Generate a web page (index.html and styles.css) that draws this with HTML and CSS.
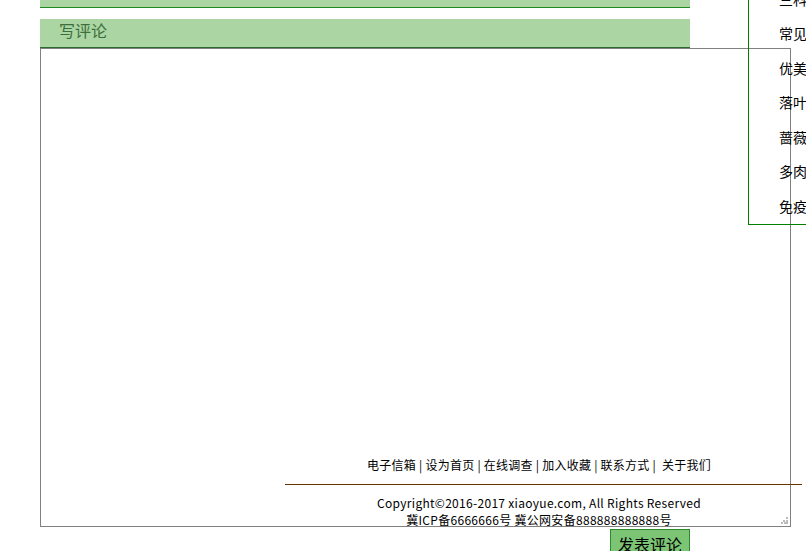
FILE: index.html
```html
<!DOCTYPE html>
<html lang="zh-CN">
<head>
<meta charset="utf-8">
<title>写评论</title>
<link rel="stylesheet" href="styles.css">
</head>
<body>
<div class="page">
  <div class="column">
    <div class="topbar"></div>
    <div class="comment-head">写评论</div>
    <div class="comment-stack">
      <textarea class="comment-box"></textarea>
      <span class="grip" aria-hidden="true"></span>
      <div class="footer">
        <div class="links">电子信箱 | 设为首页 | 在线调查 | 加入收藏 | 联系方式 |&nbsp; 关于我们</div>
        <div class="rule"></div>
        <div class="copy">Copyright©2016-2017 xiaoyue.com, All Rights Reserved</div>
        <div class="copy">冀ICP备6666666号 冀公网安备888888888888号</div>
      </div>
    </div>
    <div class="actions">
      <button class="submit" type="button">发表评论</button>
    </div>
  </div>
  <ul class="sidebar">
    <li>三科植物</li>
    <li>常见花卉</li>
    <li>优美盆栽</li>
    <li>落叶乔木</li>
    <li>蔷薇花开</li>
    <li>多肉植物</li>
    <li>免疫植物</li>
  </ul>
</div>
</body>
</html>
```

FILE: styles.css
```css
html, body {
  margin: 0;
  padding: 0;
  overflow: hidden;
  background: #ffffff;
}
body {
  font-family: "Noto Sans CJK SC", "Noto Sans", sans-serif;
  color: #000;
}
.page {
  position: relative;
  width: 806px;
  height: 551px;
  overflow: hidden;
}
.column {
  margin-left: 40px;
  width: 751px;
  display: flex;
  flex-direction: column;
}
.topbar {
  width: 650px;
  height: 7px;
  background: #acd5a4;
  border-bottom: 1px solid #1f8a1f;
}
.comment-head {
  margin-top: 11px;
  width: 631px;
  height: 28px;
  padding-left: 19px;
  background: #acd5a4;
  border-bottom: 1px solid #2e6b2e;
  color: #3b6f3b;
  font-size: 16px;
  line-height: 23px;
}
.comment-stack {
  display: grid;
  position: relative;
}
.comment-box {
  grid-area: 1 / 1;
  box-sizing: border-box;
  width: 751px;
  height: 479px;
  margin: 0;
  border: 1px solid #808080;
  background: transparent;
  resize: none;
  font-family: inherit;
}
.grip {
  position: absolute;
  right: 3px;
  bottom: 3px;
  width: 7px;
  height: 7px;
  background:
    linear-gradient(#bbb, #bbb) 5px 0 / 2px 2px no-repeat,
    linear-gradient(#bbb, #bbb) 2px 3px / 2px 2px no-repeat,
    linear-gradient(#bbb, #bbb) 5px 3px / 2px 2px no-repeat,
    linear-gradient(#bbb, #bbb) 0 5px / 2px 2px no-repeat,
    linear-gradient(#bbb, #bbb) 3px 5px / 2px 2px no-repeat,
    linear-gradient(#bbb, #bbb) 5px 5px / 2px 2px no-repeat;
}
.footer {
  grid-area: 1 / 1;
  align-self: end;
  margin-left: 245px;
  margin-bottom: -1px;
  width: 508px;
  font-size: 12px;
  line-height: 17px;
  text-align: center;
}
.links {
  line-height: 17px;
  margin-bottom: 2px;
  letter-spacing: 0.25px;
}
.rule {
  width: 517px;
  height: 1px;
  background: #663300;
  margin: 11px 0 9px;
}
.copy {
  letter-spacing: 0.3px;
}
.actions {
  width: 650px;
  display: flex;
  justify-content: flex-end;
  padding-top: 2px;
}
.submit {
  width: 80px;
  height: 30px;
  margin: 0;
  padding: 0;
  background: #7cc574;
  border: 1px solid #2f8a2f;
  font-family: inherit;
  font-size: 16px;
  line-height: 26px;
  color: #000;
}
.sidebar {
  position: absolute;
  left: 748px;
  top: -18.5px;
  width: 160px;
  margin: 0;
  padding: 0 0 0 30px;
  list-style: none;
  border-left: 1px solid #008000;
  border-bottom: 1px solid #008000;
  font-size: 14px;
  white-space: nowrap;
}
.sidebar li {
  height: 34.5px;
  line-height: 34.5px;
}
.sidebar li:last-child {
  height: 35.5px;
}
```
